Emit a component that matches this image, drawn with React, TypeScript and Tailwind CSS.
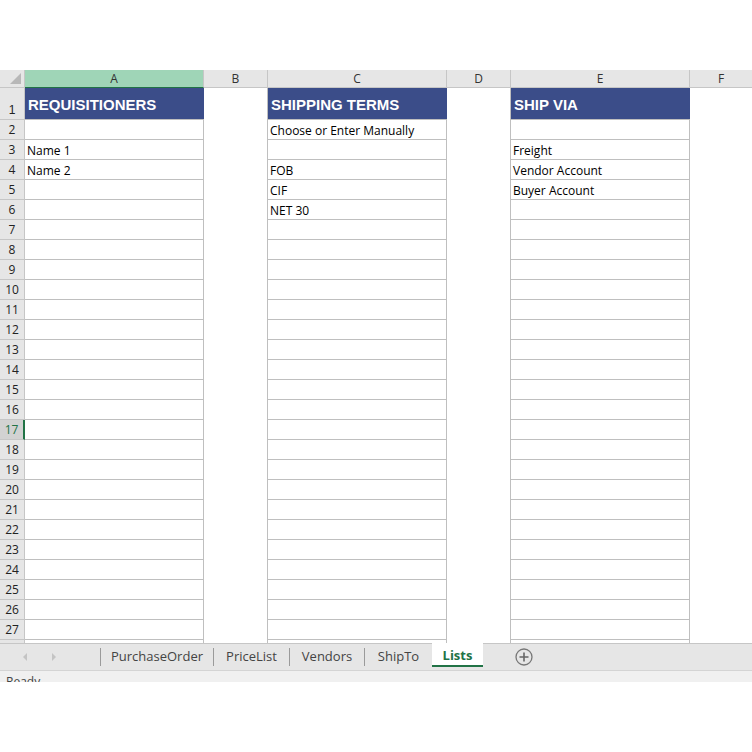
import React from "react";

const cellFont = { fontFamily: '"Open Sans", "Noto Sans", sans-serif' };

const rowsData: Record<number, [string, string, string]> = {
  2: ["", "Choose or Enter Manually", ""],
  3: ["Name 1", "", "Freight"],
  4: ["Name 2", "FOB", "Vendor Account"],
  5: ["", "CIF", "Buyer Account"],
  6: ["", "NET 30", ""],
};

function ColHeader({ label, w, active }: { label: string; w: string; active?: boolean }) {
  return (
    <div
      className={`${w} h-full flex items-center justify-center border-r border-b border-[#c6c6c6] text-[12px] text-[#333] ${
        active ? "bg-[#9fd5b7] border-b-[#217346]" : "bg-[#e6e6e6]"
      }`}
    >
      {label}
    </div>
  );
}

function RowNum({ n, h, selected }: { n: number | string; h: string; selected?: boolean }) {
  return (
    <div
      className={`w-[25px] ${h} shrink-0 flex items-end justify-center pb-[1px] border-b border-[#c6c6c6] text-[12px] leading-[16px] ${
        selected
          ? "bg-[#d2d2d2] text-[#217346] border-r-2 border-r-[#217346]"
          : "bg-[#e6e6e6] text-[#222] border-r border-r-[#c6c6c6]"
      }`}
    >
      {n}
    </div>
  );
}

function Row({ n }: { n: number }) {
  const d = rowsData[n] || ["", "", ""];
  const cell =
    "w-[179px] h-full flex items-center px-[2px] pt-[3px] text-[12px] text-black whitespace-nowrap overflow-hidden border-b border-r border-[#bfbfbf]";
  return (
    <div className="flex h-[20px]">
      <RowNum n={n} h="h-[20px]" selected={n === 17} />
      <div className={cell}>{d[0]}</div>
      <div className="w-[64px] h-full border-r border-[#bfbfbf]" />
      <div className={cell}>{d[1]}</div>
      <div className="w-[64px] h-full border-r border-[#bfbfbf]" />
      <div className={cell}>{d[2]}</div>
      <div className="flex-1 h-full" />
    </div>
  );
}

function Arrow({ dir }: { dir: "l" | "r" }) {
  return (
    <svg width="6" height="10" viewBox="0 0 6 10">
      {dir === "l" ? <path d="M5 1 L1 5 L5 9 Z" fill="#c4c4c4" /> : <path d="M1 1 L5 5 L1 9 Z" fill="#c4c4c4" />}
    </svg>
  );
}

export default function App() {
  const rows: number[] = [];
  for (let i = 2; i <= 27; i++) rows.push(i);
  const head =
    "w-[179px] h-full flex items-center px-[3px] pt-[4px] bg-[#3b4d89] text-white font-bold text-[15px] whitespace-nowrap border-b border-[#bfbfbf]";
  return (
    <div className="w-[752px] h-[752px] bg-white overflow-hidden flex flex-col" style={cellFont}>
      <div className="h-[70px] shrink-0" />
      {/* Column headers */}
      <div className="flex h-[18px] shrink-0">
        <div className="w-[25px] h-full bg-[#e6e6e6] border-r border-b border-[#c6c6c6] flex items-end justify-end p-[3px]">
          <svg width="11" height="11" viewBox="0 0 11 11">
            <path d="M11 0 L11 11 L0 11 Z" fill="#b8b8b8" />
          </svg>
        </div>
        <ColHeader label="A" w="w-[179px]" active />
        <ColHeader label="B" w="w-[64px]" />
        <ColHeader label="C" w="w-[179px]" />
        <ColHeader label="D" w="w-[64px]" />
        <ColHeader label="E" w="w-[179px]" />
        <div className="flex-1 h-full flex items-center justify-center border-b border-[#c6c6c6] bg-[#e6e6e6] text-[12px] text-[#333]">
          F
        </div>
      </div>
      {/* Row 1 */}
      <div className="flex h-[32px] shrink-0" style={{ fontFamily: '"Liberation Sans", Arial, sans-serif' }}>
        <RowNum n={1} h="h-[32px]" />
        <div className={head}>REQUISITIONERS</div>
        <div className="w-[64px] h-full border-r border-[#bfbfbf]" />
        <div className={head}>SHIPPING TERMS</div>
        <div className="w-[64px] h-full border-r border-[#bfbfbf]" />
        <div className={head}>SHIP VIA</div>
        <div className="flex-1 h-full" />
      </div>
      {rows.map((n) => (
        <Row key={n} n={n} />
      ))}
      <div className="flex h-[3px] shrink-0">
        <div className="w-[25px] h-full bg-[#e6e6e6] border-r border-[#c6c6c6]" />
        <div className="w-[179px] h-full border-r border-[#bfbfbf]" />
        <div className="w-[64px] h-full border-r border-[#bfbfbf]" />
        <div className="w-[179px] h-full border-r border-[#bfbfbf]" />
        <div className="w-[64px] h-full border-r border-[#bfbfbf]" />
        <div className="w-[179px] h-full border-r border-[#bfbfbf]" />
        <div className="flex-1" />
      </div>
      {/* Tab bar */}
      <div className="flex h-[28px] shrink-0 bg-[#e6e6e6] border-b border-[#d4d4d4] text-[13px] text-[#444]">
        <div className="w-[100px] h-full flex items-center border-t border-[#c6c6c6]">
          <div className="w-[28px] flex justify-end"><Arrow dir="l" /></div>
          <div className="w-[29px] flex justify-end"><Arrow dir="r" /></div>
        </div>
        {[
          ["PurchaseOrder", "w-[113px]"],
          ["PriceList", "w-[76px]"],
          ["Vendors", "w-[75px]"],
          ["ShipTo", "w-[68px]"],
        ].map(([t, w]) => (
          <div key={t} className={`${w} h-full border-t border-[#c6c6c6] flex items-center`}>
            <div className="w-px h-[18px] bg-[#9a9a9a]" />
            <div className="flex-1 text-center pb-[1px]">{t}</div>
          </div>
        ))}
        <div className="w-[51px] h-[24px] pt-[4px] bg-white border-b-2 border-[#217346] flex items-center justify-center font-bold text-[#217346]">
          Lists
        </div>
        <div className="flex-1 h-full border-t border-[#c6c6c6] flex items-center pl-[32px]">
          <svg width="18" height="18" viewBox="0 0 18 18">
            <circle cx="9" cy="9" r="8" fill="none" stroke="#777" strokeWidth="1.3" />
            <path d="M9 4.5 V13.5 M4.5 9 H13.5" stroke="#666" strokeWidth="1.6" />
          </svg>
        </div>
      </div>
      {/* Status bar */}
      <div className="h-[11px] shrink-0 bg-[#f0f0f0] overflow-hidden text-[12px] text-[#444] pl-[6px] leading-[20px] pt-[1px]">
        Ready
      </div>
      <div className="flex-1 bg-white" />
    </div>
  );
}
